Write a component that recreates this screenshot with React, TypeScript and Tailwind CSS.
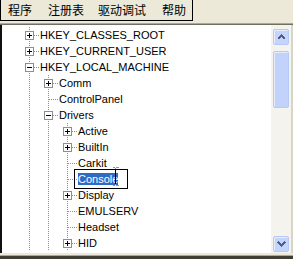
import React from "react";

type Row = { label: string; level: number; box?: "plus" | "minus"; editing?: boolean };

const ROWS: Row[] = [
  { label: "HKEY_CLASSES_ROOT", level: 0, box: "plus" },
  { label: "HKEY_CURRENT_USER", level: 0, box: "plus" },
  { label: "HKEY_LOCAL_MACHINE", level: 0, box: "minus" },
  { label: "Comm", level: 1, box: "plus" },
  { label: "ControlPanel", level: 1 },
  { label: "Drivers", level: 1, box: "minus" },
  { label: "Active", level: 2, box: "plus" },
  { label: "BuiltIn", level: 2, box: "plus" },
  { label: "Carkit", level: 2 },
  { label: "Console", level: 2, editing: true },
  { label: "Display", level: 2, box: "plus" },
  { label: "EMULSERV", level: 2 },
  { label: "Headset", level: 2 },
  { label: "HID", level: 2, box: "plus" },
];

function Guide() {
  return (
    <svg width="19" height="16" className="shrink-0" shapeRendering="crispEdges">
      <line x1="9.5" y1="0" x2="9.5" y2="16" stroke="#8e8e8e" strokeDasharray="1 1" />
    </svg>
  );
}

function Joint({ box }: { box?: "plus" | "minus" }) {
  return (
    <svg width="19" height="16" className="shrink-0" shapeRendering="crispEdges">
      <line x1="9.5" y1="0" x2="9.5" y2="16" stroke="#8e8e8e" strokeDasharray="1 1" />
      <line x1="10" y1="8.5" x2="19" y2="8.5" stroke="#8e8e8e" strokeDasharray="1 1" />
      {box && (
        <g>
          <rect x="5.5" y="4.5" width="8" height="8" fill="#fff" stroke="#8e8e8e" />
          <line x1="7" y1="8.5" x2="12" y2="8.5" stroke="#000" />
          {box === "plus" && <line x1="9.5" y1="6" x2="9.5" y2="11" stroke="#000" />}
        </g>
      )}
    </svg>
  );
}

function Chevron({ up }: { up?: boolean }) {
  return (
    <svg width="9" height="6" viewBox="0 0 9 6" shapeRendering="crispEdges">
      <path d={up ? "M1 5 L4.5 1.5 L8 5" : "M1 1 L4.5 4.5 L8 1"} fill="none" stroke="#4d6185" strokeWidth="2" />
    </svg>
  );
}

function ScrollButton({ up }: { up?: boolean }) {
  return (
    <div className="flex h-[16px] w-[16px] items-center justify-center rounded-[2px] border border-[#b7c9f5] bg-[#c4d4fc] shadow-[inset_1px_1px_0_#e4ecfe]">
      <Chevron up={up} />
    </div>
  );
}

export default function App() {
  return (
    <div className="h-[259px] w-[293px] overflow-hidden bg-[#ece9d8] font-['Liberation_Sans',sans-serif] text-black">
      <div className="flex h-[21px]">
        <div className="flex h-[21px] border-b border-l border-r border-black pl-[7px] pr-[6px] font-['Noto_Sans_CJK_SC',sans-serif] text-[12px] leading-[20px]">
          <span>程序</span>
          <span className="ml-[16px]">注册表</span>
          <span className="ml-[14px]">驱动调试</span>
          <span className="ml-[16px]">帮助</span>
        </div>
      </div>
      <div className="h-[2px]" />
      <div className="h-[1px] bg-[#aca899]" />
      <div className="h-[1px] bg-[#716f64]" />

      <div className="flex h-[228px]">
        <div className="w-[2px] bg-[#111]" />
        <div className="flex-1 overflow-hidden bg-white pl-[18px] pt-[2px]">
          {ROWS.map((r) => (
            <div key={r.label} className="flex h-[16px] items-center">
              {Array.from({ length: r.level }).map((_, i) => (
                <Guide key={i} />
              ))}
              <Joint box={r.box} />
              {r.editing ? (
                <span className="relative ml-[1px] text-[11px] leading-[16px]">
                  <span className="bg-[#316ac5] text-white">{r.label}</span>
                  <span className="absolute left-[-4px] top-[-2px] h-[20px] w-[54px] border border-black" />
                  <svg className="absolute left-[34px] top-[-4px]" width="7" height="19" shapeRendering="crispEdges">
                    <path d="M0.5 0.5 H2.5 L3.5 1.5 L4.5 0.5 H6.5 M3.5 1.5 V17.5 M0.5 18.5 H2.5 L3.5 17.5 L4.5 18.5 H6.5" fill="none" stroke="#d9822b" />
                    <path d="M3.5 2 V17" stroke="#000" />
                  </svg>
                </span>
              ) : (
                <span className="ml-[1px] text-[11px] leading-[16px]">{r.label}</span>
              )}
            </div>
          ))}
        </div>
        <div className="flex w-[20px] flex-col bg-[#f4f3ee] pb-[1px] pl-[2px] pt-[4px]">
          <ScrollButton up />
          <div className="mt-[6px] h-[57px] w-[16px] rounded-[2px] border border-[#b7c9f5] bg-[#c1d2fb] shadow-[inset_1px_1px_0_#e4ecfe]" />
          <div className="flex-1" />
          <ScrollButton />
        </div>
        <div className="w-[2px] bg-[#d8d5c8]" />
      </div>

      <div className="h-[2px] bg-[#ece9d8]" />
      <div className="h-[1px] bg-[#aca899]" />
      <div className="h-[3px] bg-[#3f3d34]" />
    </div>
  );
}
